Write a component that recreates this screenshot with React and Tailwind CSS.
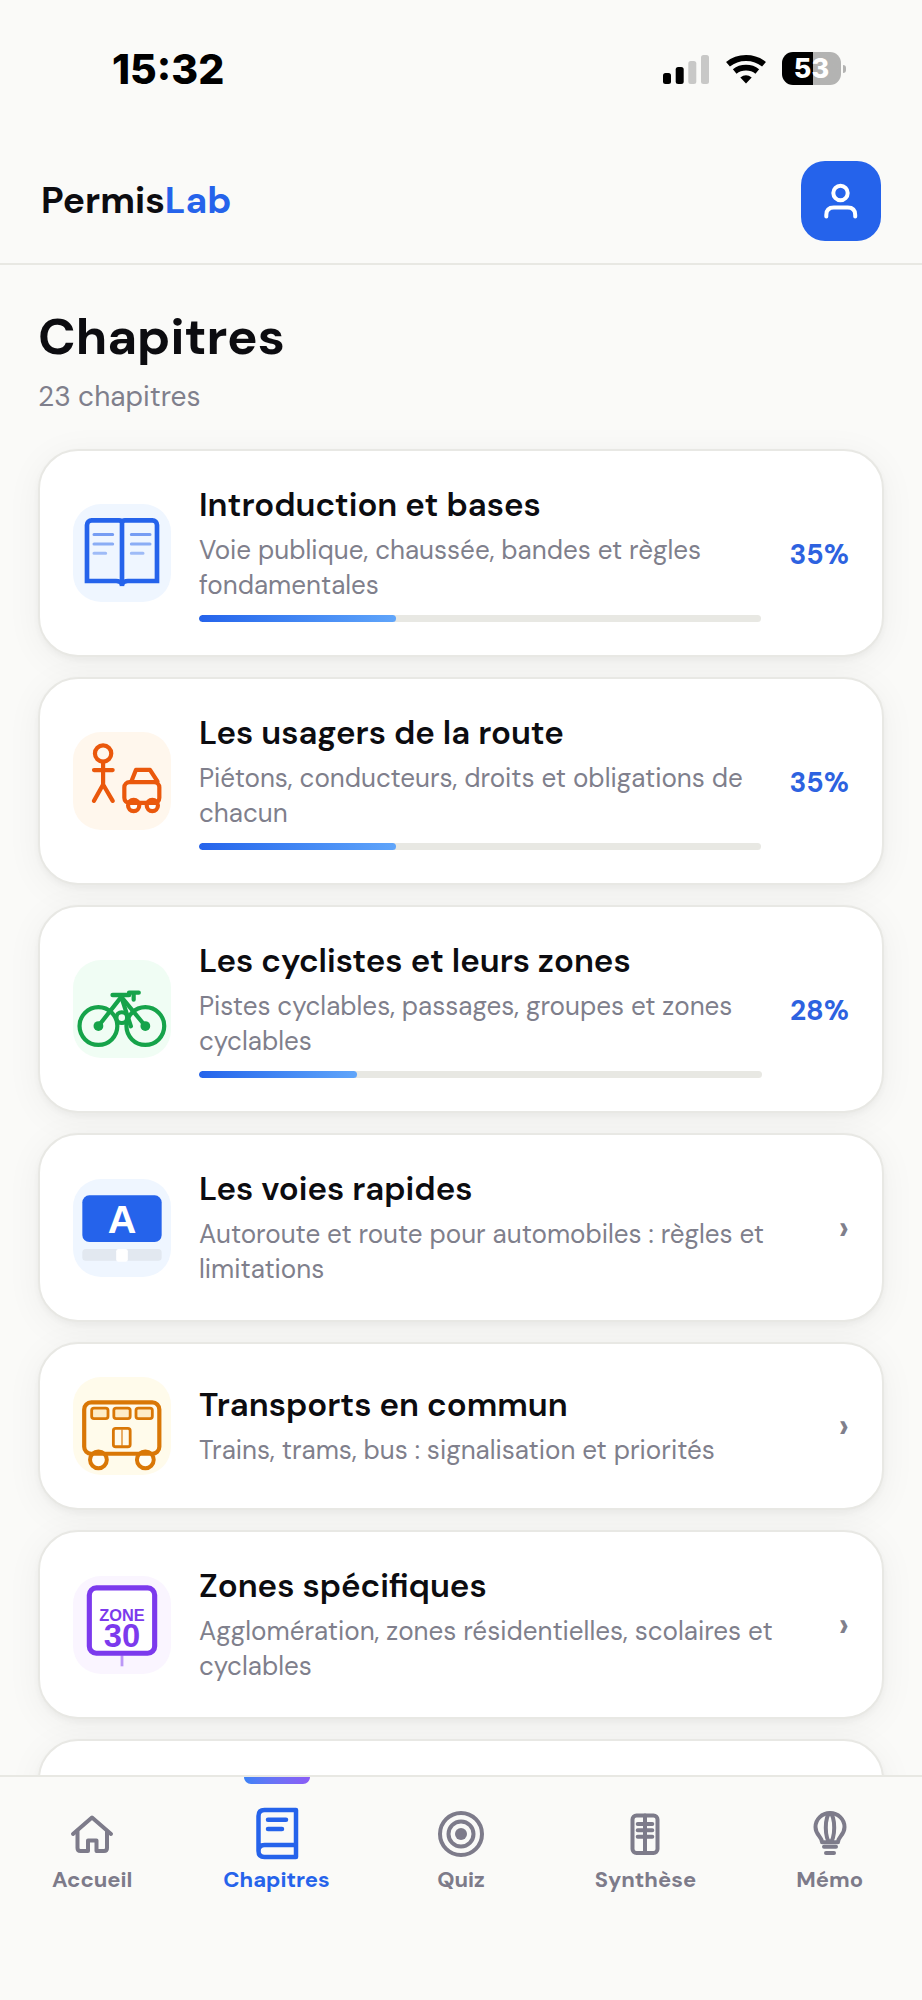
import { useState } from 'react'

const chapters = [
  {
    title: 'Introduction et bases',
    description: 'Voie publique, chaussée, bandes et règles fondamentales',
    progress: 35,
    icon: BookIcon,
  },
  {
    title: 'Les usagers de la route',
    description: 'Piétons, conducteurs, droits et obligations de chacun',
    progress: 35,
    icon: UsersIcon,
  },
  {
    title: 'Les cyclistes et leurs zones',
    description: 'Pistes cyclables, passages, groupes et zones cyclables',
    progress: 28,
    icon: BikeIcon,
  },
  {
    title: 'Les voies rapides',
    description: 'Autoroute et route pour automobiles : règles et limitations',
    icon: MotorwayIcon,
  },
  {
    title: 'Transports en commun',
    description: 'Trains, trams, bus : signalisation et priorités',
    icon: BusIcon,
  },
  {
    title: 'Zones spécifiques',
    description: 'Agglomération, zones résidentielles, scolaires et cyclables',
    icon: ZoneIcon,
  },
]

const tabs = [
  { id: 'accueil', label: 'Accueil', icon: HomeTab },
  { id: 'chapitres', label: 'Chapitres', icon: ChaptersTab },
  { id: 'quiz', label: 'Quiz', icon: QuizTab },
  { id: 'synthese', label: 'Synthèse', icon: SummaryTab },
  { id: 'memo', label: 'Mémo', icon: MemoTab },
]

function Tile({ fill, children }) {
  return (
    <svg viewBox="0 0 42 42" className="size-[98px] shrink-0" fill="none" aria-hidden="true">
      <rect width="42" height="42" rx="12" fill={fill} />
      {children}
    </svg>
  )
}

function BookIcon() {
  return (
    <Tile fill="#eff6ff">
      <g stroke="#2563eb" strokeWidth="2">
        <path d="M21 8q-.2-1-1.200-1H8a2 2 0 0 0-2 2v24h12.500q1.700 0 2.500 1.200" />
        <path d="M21 8q.2-1 1.200-1H34a2 2 0 0 1 2 2v24H23.500q-1.700 0-2.500 1.200" />
        <path d="M21 7.200V35.200" />
      </g>
      <g stroke="#2563eb" strokeWidth="1.3" strokeLinecap="round">
        <path d="M9 13.100h8M25 13.100h8" opacity=".6" />
        <path d="M9 17.100h8M25 17.100h8" opacity=".5" />
        <path d="M9 21.100h5M25 21.100h5" opacity=".4" />
      </g>
    </Tile>
  )
}

function UsersIcon() {
  return (
    <Tile fill="#fff7ed">
      <g stroke="#ea580c" strokeWidth="1.8" strokeLinecap="round" strokeLinejoin="round">
        <circle cx="12.900" cy="9.200" r="3.500" />
        <path d="M12.900 12.800V22.500M9 16.300h8M12.900 22.500L9 29.500M12.900 22.500L17 29.500" />
        <circle cx="26" cy="31.500" r="2.400" fill="#fffdfa" />
        <circle cx="34" cy="31.500" r="2.400" fill="#fffdfa" />
        <rect x="22" y="21.500" width="15" height="8.900" rx="2.200" />
        <path d="M25 21.200l2-5h6l3.200 5" />
        <path d="M24.500 30.300h3M32.500 30.300h3" strokeWidth="1.900" />
      </g>
    </Tile>
  )
}

function BikeIcon() {
  return (
    <Tile fill="#f0fdf4">
      <g stroke="#16a34a" strokeWidth="1.800" strokeLinecap="round" strokeLinejoin="round">
        <circle cx="10.900" cy="28.300" r="8.100" />
        <circle cx="31" cy="28.300" r="8.100" />
        <circle cx="20.900" cy="24.700" r="2.300" />
        <path d="M10.900 28.300L20.700 15.800L31 28.300" />
        <path d="M20.700 15.800l4.100 12.600" />
        <path d="M17 15h7" strokeWidth="2" />
        <path d="M24 14h4.200M26 14.300v2.700" strokeWidth="1.800" />
      </g>
      <circle cx="10.900" cy="28.300" r="2.100" fill="#16a34a" />
      <circle cx="31" cy="28.300" r="2.100" fill="#16a34a" />
    </Tile>
  )
}

function MotorwayIcon() {
  return (
    <Tile fill="#eff6ff">
      <rect x="4" y="7" width="34" height="20" rx="3" fill="#2563eb" />
      <text
        x="21"
        y="23"
        textAnchor="middle"
        fill="#ffffff"
        className="font-['Liberation_Sans',sans-serif] text-[17px] font-bold"
      >
        A
      </text>
      <rect x="4" y="30" width="34" height="5" rx="1.500" fill="#e2e8f0" />
      <rect x="18.500" y="30" width="5" height="5.500" rx="1" fill="#ffffff" />
    </Tile>
  )
}

function BusIcon() {
  return (
    <Tile fill="#fffbeb">
      <g stroke="#d97706">
        <rect x="4.800" y="10.900" width="32.200" height="22" rx="3" strokeWidth="1.800" />
        <g strokeWidth="1.200" fill="#fdecc8">
          <rect x="8" y="13.300" width="7" height="4.500" rx="1" />
          <rect x="17.500" y="13.300" width="7" height="4.500" rx="1" />
          <rect x="27" y="13.300" width="7" height="4.500" rx="1" />
        </g>
        <rect x="17.300" y="22" width="7.200" height="7.900" rx="1" strokeWidth="1.200" />
        <path d="M21 22.500v7" strokeWidth=".5" />
        <circle cx="10.900" cy="35.500" r="3.600" strokeWidth="1.700" fill="#fffdf5" />
        <circle cx="31" cy="35.500" r="3.600" strokeWidth="1.700" fill="#fffdf5" />
        <path d="M8.500 32.900h4.800M28.600 32.900h4.800" strokeWidth="1.800" />
      </g>
    </Tile>
  )
}

function ZoneIcon() {
  return (
    <Tile fill="#faf5ff">
      <path d="M21 34v4.700" stroke="#7c3aed" strokeWidth="1.200" opacity=".5" />
      <rect x="7" y="5.100" width="28" height="28" rx="3" fill="#ffffff" stroke="#7c3aed" strokeWidth="2.200" />
      <text textAnchor="middle" fill="#7c3aed" className="font-['Liberation_Sans',sans-serif] font-bold">
        <tspan x="21" y="19.200" className="text-[7px]">
          ZONE
        </tspan>
        <tspan x="21" y="30.500" className="text-[14px]">
          30
        </tspan>
      </text>
    </Tile>
  )
}

function TabIcon({ children }) {
  return (
    <svg
      viewBox="0 0 52 52"
      className="size-[52px] overflow-visible"
      fill="none"
      stroke="currentColor"
      strokeWidth="4"
      strokeLinecap="round"
      strokeLinejoin="round"
      aria-hidden="true"
    >
      {children}
    </svg>
  )
}

function HomeTab() {
  return (
    <TabIcon>
      <path d="M7 26L26 9.500L45 26" />
      <path d="M11.500 23.500V40q0 3 3 3H22V32.500h8.500V43H38q3 0 3-3V23.500" />
    </TabIcon>
  )
}

function ChaptersTab() {
  return (
    <TabIcon>
      <path d="M7.500 43V8q0-6 6-6H45v47H13.500q-6 0-6-6t6-6H45" strokeWidth="4.500" />
      <path d="M17 11.700h18M17 21h14" strokeWidth="4.500" />
    </TabIcon>
  )
}

function QuizTab() {
  return (
    <TabIcon>
      <circle cx="26" cy="26" r="21" />
      <circle cx="26" cy="26" r="12.500" />
      <circle cx="26" cy="26" r="6" fill="currentColor" stroke="none" />
    </TabIcon>
  )
}

function SummaryTab() {
  return (
    <TabIcon>
      <rect x="13.500" y="7.600" width="25" height="37.500" rx="4" />
      <path d="M26 7.600v37.500" />
      <path d="M18.700 16h14.600M18.700 22.300h14.600M18.700 28.700h14.600" />
    </TabIcon>
  )
}

function MemoTab() {
  return (
    <TabIcon>
      <path d="M18 34.300c0-6-6.500-7-6.500-15.300a14.500 14 0 0 1 29 0c0 8.300-6.500 9.300-6.500 15.300z" />
      <ellipse cx="26" cy="19.700" rx="4.200" ry="14.200" />
      <path d="M20 38.700h12M22 45h8" />
    </TabIcon>
  )
}

function StatusBar() {
  return (
    <div className="flex h-[139px] items-start justify-between pt-12 pr-[76px] pl-28 font-[Inter,sans-serif]">
      <span className="text-[41px] leading-[42px] font-extrabold text-black">15:32</span>
      <div className="flex items-center gap-4 pt-1">
        <svg width="47" height="30" viewBox="0 0 47 30" aria-hidden="true">
          <rect x="0" y="19" width="8" height="11" rx="2.500" />
          <rect x="12.700" y="13" width="8" height="17" rx="2.500" />
          <rect x="25.300" y="7" width="8" height="23" rx="2.500" fill="#c8c8c7" />
          <rect x="38" y="1" width="8" height="29" rx="2.500" fill="#c8c8c7" />
        </svg>
        <svg width="40" height="30" viewBox="0 0 40 30" aria-hidden="true">
          <g fill="none" stroke="#000000" strokeWidth="6">
            <path d="M2 10.300Q9.500 4 20 4T38 10.300" />
            <path d="M8.700 17.500Q13.400 13.700 20 13.700T31.300 17.500" strokeWidth="5.800" />
          </g>
          <path d="M20 29.500L14.300 23.600Q20 19 25.700 23.600Z" />
        </svg>
        <div className="flex items-center gap-0.5">
          <span className="flex h-[33px] w-[59px] items-center justify-center rounded-[11px] bg-linear-to-r from-black from-53% to-[#b3b3b2] to-53% text-[27px] leading-none font-extrabold text-white">
            53
          </span>
          <span className="h-2 w-[3px] rounded-r-full bg-[#b3b3b2]" />
        </div>
      </div>
    </div>
  )
}

function Header() {
  return (
    <header className="flex h-[126px] shrink-0 items-center justify-between border-b-2 border-[#e8e8e3] px-[41px]">
      <a href="#accueil" className="text-[37px] font-bold">
        Permis<span className="text-[#2563eb]">Lab</span>
      </a>
      <button type="button" aria-label="Profil" className="size-20 rounded-3xl bg-[#2563eb]">
        <svg viewBox="0 0 80 80" fill="none" stroke="#ffffff" strokeWidth="4" strokeLinecap="round" aria-hidden="true">
          <circle cx="39.500" cy="32" r="7.200" />
          <path d="M25.300 55.500v-1.500q0-7.500 7.500-7.500h13.900q7.500 0 7.500 7.500v1.500" />
        </svg>
      </button>
    </header>
  )
}

const cardClass =
  'rounded-[40px] border-2 border-[#e8e8e4] bg-white shadow-[0_3px_6px_rgba(0,0,0,0.04),0_6px_36px_rgba(0,0,0,0.05)]'

function ChapterCard({ title, description, progress, icon: Icon }) {
  return (
    <a href="#chapitre" className={`${cardClass} flex items-center gap-7 p-[33px]`}>
      <Icon />
      <div className="min-w-0 flex-1">
        <h2 className="pb-2 text-[33px] leading-[41px] font-semibold">{title}</h2>
        <p className="text-[26px] leading-[35px] text-[#7f7f8c]">{description}</p>
        {progress && (
          <div className="mt-3 h-[7px] overflow-hidden rounded-full bg-[#e8e8e3]">
            <div
              className="h-full rounded-full bg-linear-to-r from-[#2563eb] to-[#60a5fa]"
              style={{ width: `${progress}%` }}
            />
          </div>
        )}
      </div>
      {progress ? (
        <span className="pt-1 text-[28px] font-bold text-[#2d62e0]">{progress}%</span>
      ) : (
        <span className="text-4xl font-semibold text-[#7f7f8c]">›</span>
      )}
    </a>
  )
}

function TabBar({ active, onSelect }) {
  return (
    <nav className="h-[225px] shrink-0 border-t-2 border-[#e8e8e3] bg-[#fafaf8]">
      <ul className="grid grid-cols-5">
        {tabs.map(({ id, label, icon: Icon }) => (
          <li key={id}>
            <a
              href={`#${id}`}
              onClick={() => onSelect(id)}
              className={`flex flex-col items-center ${active === id ? 'text-[#2563eb]' : 'text-[#7d7b8a]'}`}
            >
              <span
                className={`mb-6 h-[7px] w-[66px] rounded-b-lg ${
                  active === id ? 'bg-linear-to-r from-[#3b82f6] to-[#8b5cf6]' : ''
                }`}
              />
              <Icon />
              <span className="mt-1.5 text-[22px] leading-7 font-bold">{label}</span>
            </a>
          </li>
        ))}
      </ul>
    </nav>
  )
}

function App() {
  const [active, setActive] = useState('chapitres')

  return (
    <div className="flex h-screen flex-col bg-[#fafaf8] font-['DM_Sans',Inter,sans-serif] text-[#0c0c10]">
      <StatusBar />
      <Header />
      <main className="min-h-0 flex-1 overflow-hidden px-[38px] pt-10">
        <h1 className="text-[51px] leading-[64px] font-bold">Chapitres</h1>
        <p className="mt-2.5 text-[28px] leading-9 text-[#7f7f8c]">23 chapitres</p>
        <div className="mt-[34px] flex flex-col gap-5">
          {chapters.map((chapter) => (
            <ChapterCard key={chapter.title} {...chapter} />
          ))}
          <div className={`${cardClass} h-[189px]`} />
        </div>
      </main>
      <TabBar active={active} onSelect={setActive} />
    </div>
  )
}

export default App
